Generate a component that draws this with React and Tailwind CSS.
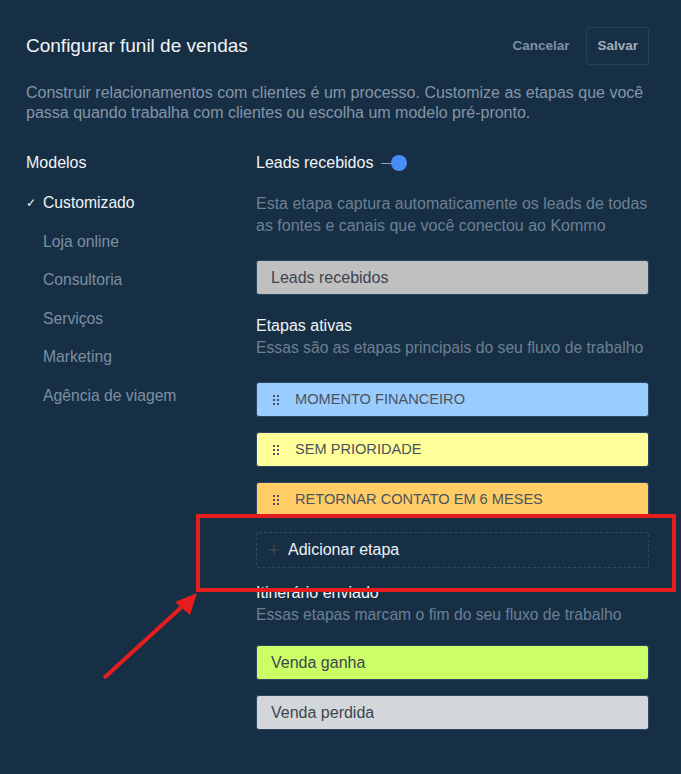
import React from "react";

function Handle() {
  return (
    <div className="grid grid-cols-2 gap-x-[2px] gap-y-[2px] w-[6px]">
      {[0, 1, 2, 3, 4, 5].map((i) => (
        <span key={i} className="block w-[2px] h-[2px] bg-[#4b5563]" />
      ))}
    </div>
  );
}

function Stage({ bg, children }) {
  return (
    <div className={`h-[35px] rounded-[3px] border border-[#2c4761] ${bg} flex items-center pl-[16px] gap-[16px]`}>
      <Handle />
      <span className="text-[14.6px] text-[#4a5260] uppercase">{children}</span>
    </div>
  );
}

function Plain({ bg, children }) {
  return (
    <div className={`h-[35px] rounded-[3px] border border-[#2c4761] ${bg} flex items-center pl-[14px]`}>
      <span className="text-[16px] text-[#3d4550]">{children}</span>
    </div>
  );
}

export default function App() {
  const models = ["Customizado", "Loja online", "Consultoria", "Serviços", "Marketing", "Agência de viagem"];
  return (
    <div className="relative min-h-screen bg-[#162f45] px-[26px] pt-[27px] font-['Liberation_Sans',sans-serif]">
      <div className="flex items-center justify-between w-[623px] h-[38px]">
        <h1 className="text-[19px] text-[#f1f4f7]">Configurar funil de vendas</h1>
        <div className="flex items-center gap-[17px]">
          <span className="text-[13.5px] font-bold text-[#7d8fa3]">Cancelar</span>
          <button className="h-[38px] px-[10px] rounded-[3px] border border-[#25405a] text-[13.5px] font-bold text-[#a3aebb]">
            Salvar
          </button>
        </div>
      </div>
      <p className="mt-[18px] w-[623px] text-[16px] leading-[20px] text-[#8595a7]">
        Construir relacionamentos com clientes é um processo. Customize as etapas que você passa quando trabalha com clientes ou escolha um modelo pré-pronto.
      </p>

      <div className="flex mt-[29px]">
        <div className="w-[230px]">
          <div className="h-[22px] leading-[22px] text-[16px] text-[#f1f4f7]">Modelos</div>
          <ul className="mt-[18px] flex flex-col gap-[16.6px]">
            {models.map((m, i) => (
              <li key={m} className="h-[22px] leading-[22px] flex items-center text-[15.7px]">
                <span className="w-[17px] text-[12px] text-[#f1f4f7]">{i === 0 ? "✓" : ""}</span>
                <span className={i === 0 ? "text-[#f1f4f7]" : "text-[#7d8fa3]"}>{m}</span>
              </li>
            ))}
          </ul>
        </div>

        <div className="w-[393px]">
          <div className="h-[22px] flex items-center">
            <span className="text-[16px] text-[#f1f4f7]">Leads recebidos</span>
            <span className="ml-[8px] w-[10px] h-px bg-[#8a9bb0]" />
            <span className="w-[16px] h-[16px] rounded-full bg-[#4a8cf6]" />
          </div>
          <p className="mt-[19px] text-[16px] leading-[22px] text-[#6d8093]">
            Esta etapa captura automaticamente os leads de todas as fontes e canais que você conectou ao Kommo
          </p>
          <div className="mt-[23px]">
            <Plain bg="bg-[#c0c0c0]">Leads recebidos</Plain>
          </div>

          <div className="mt-[20px] h-[22px] leading-[22px] text-[16px] text-[#f1f4f7]">Etapas ativas</div>
          <div className="h-[22px] leading-[22px] text-[15.7px] text-[#6d8093]">Essas são as etapas principais do seu fluxo de trabalho</div>

          <div className="mt-[23px] flex flex-col gap-[15px]">
            <Stage bg="bg-[#99ccff]">Momento financeiro</Stage>
            <Stage bg="bg-[#ffff99]">Sem prioridade</Stage>
            <Stage bg="bg-[#ffcc66]">Retornar contato em 6 meses</Stage>
            <div className="h-[36px] rounded-[3px] border border-dashed border-[#2e4963] flex items-center pl-[12px] gap-[9px]">
              <svg width="10" height="10" viewBox="0 0 10 10" className="shrink-0">
                <path d="M5 0v10M0 5h10" stroke="#4d4f55" strokeWidth="1" />
              </svg>
              <span className="text-[16px] text-[#eef2f6]">Adicionar etapa</span>
            </div>
          </div>

          <div className="mt-[14px] h-[22px] leading-[22px] text-[16px] text-[#f1f4f7]">Itinerário enviado</div>
          <div className="h-[22px] leading-[22px] text-[15.7px] text-[#6d8093]">Essas etapas marcam o fim do seu fluxo de trabalho</div>

          <div className="mt-[19px] flex flex-col gap-[15px]">
            <Plain bg="bg-[#ccff66]">Venda ganha</Plain>
            <Plain bg="bg-[#d3d7da]">Venda perdida</Plain>
          </div>
        </div>
      </div>

      <div className="absolute left-[196px] top-[514px] w-[480px] h-[78px] border-4 border-[#e51d1d]" />
      <svg className="absolute left-0 top-0" width="681" height="774" viewBox="0 0 681 774">
        <line x1="104" y1="678" x2="186" y2="603" stroke="#e51d1d" strokeWidth="4" />
        <polygon points="197,593 175,602 190,615" fill="#e51d1d" />
      </svg>
    </div>
  );
}
